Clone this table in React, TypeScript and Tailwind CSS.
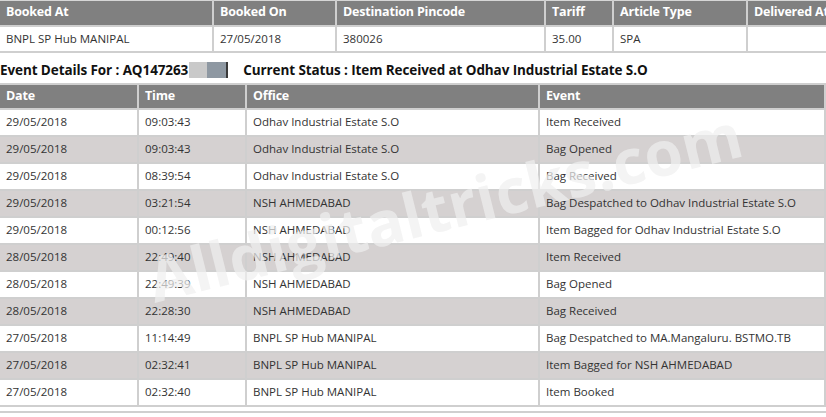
import React from "react";

interface EventRow {
  date: string;
  time: string;
  office: string;
  event: string;
}

const events: EventRow[] = [
  { date: "29/05/2018", time: "09:03:43", office: "Odhav Industrial Estate S.O", event: "Item Received" },
  { date: "29/05/2018", time: "09:03:43", office: "Odhav Industrial Estate S.O", event: "Bag Opened" },
  { date: "29/05/2018", time: "08:39:54", office: "Odhav Industrial Estate S.O", event: "Bag Received" },
  { date: "29/05/2018", time: "03:21:54", office: "NSH AHMEDABAD", event: "Bag Despatched to Odhav Industrial Estate S.O" },
  { date: "29/05/2018", time: "00:12:56", office: "NSH AHMEDABAD", event: "Item Bagged for Odhav Industrial Estate S.O" },
  { date: "28/05/2018", time: "22:49:40", office: "NSH AHMEDABAD", event: "Item Received" },
  { date: "28/05/2018", time: "22:49:39", office: "NSH AHMEDABAD", event: "Bag Opened" },
  { date: "28/05/2018", time: "22:28:30", office: "NSH AHMEDABAD", event: "Bag Received" },
  { date: "27/05/2018", time: "11:14:49", office: "BNPL SP Hub MANIPAL", event: "Bag Despatched to MA.Mangaluru. BSTMO.TB" },
  { date: "27/05/2018", time: "02:32:41", office: "BNPL SP Hub MANIPAL", event: "Item Bagged for NSH AHMEDABAD" },
  { date: "27/05/2018", time: "02:32:40", office: "BNPL SP Hub MANIPAL", event: "Item Booked" },
];

const th = "h-[25px] px-[6px] text-left font-bold text-white text-[12.5px] tracking-[-0.2px] border-x-2 border-[#cfcfcf] first:border-l-0 whitespace-nowrap";
const td = "px-[6px] text-left text-[11.5px] text-[#333] border-2 border-[#cfcfcf] first:border-l-0 whitespace-nowrap";

export default function App() {
  return (
    <div
      className="relative w-[826px] h-[417px] overflow-hidden bg-white"
      style={{ fontFamily: '"Open Sans", "Noto Sans", sans-serif' }}
    >
      {/* booking summary */}
      <table className="w-[880px] table-fixed border-collapse border-t border-[#d6d6d6]">
        <colgroup>
          <col className="w-[213px]" />
          <col className="w-[123px]" />
          <col className="w-[209px]" />
          <col className="w-[68px]" />
          <col className="w-[134px]" />
          <col />
        </colgroup>
        <thead className="bg-[#808080]">
          <tr>
            <th className={th}>Booked At</th>
            <th className={th}>Booked On</th>
            <th className={th}>Destination Pincode</th>
            <th className={th}>Tariff</th>
            <th className={th}>Article Type</th>
            <th className={th}>Delivered At</th>
          </tr>
        </thead>
        <tbody>
          <tr>
            <td className={`${td} h-[26px]`}>BNPL SP Hub MANIPAL</td>
            <td className={`${td} h-[26px]`}>27/05/2018</td>
            <td className={`${td} h-[26px]`}>380026</td>
            <td className={`${td} h-[26px]`}>35.00</td>
            <td className={`${td} h-[26px]`}>SPA</td>
            <td className={`${td} h-[26px]`}></td>
          </tr>
        </tbody>
      </table>

      <div className="h-[30px] pt-[5px] flex items-center text-[13.5px] tracking-[-0.1px] font-bold text-[#111] whitespace-nowrap">
        <span>Event Details For : AQ147263</span>
        <span className="ml-px inline-block w-[18px] h-[16px] bg-[#c9c9c9]" />
        <span className="inline-block w-[19px] h-[16px] bg-[#8e98a2]" />
        <span className="inline-block w-[2px] h-[16px] bg-[#3a3a3a]" />
        <span className="ml-[15px]">Current Status : Item Received at Odhav Industrial Estate S.O</span>
      </div>

      {/* event history */}
      <table className="w-[826px] table-fixed border-collapse">
        <colgroup>
          <col className="w-[138px]" />
          <col className="w-[108px]" />
          <col className="w-[293px]" />
          <col />
        </colgroup>
        <thead className="bg-[#808080]">
          <tr>
            <th className={`${th} border-t-2`}>Date</th>
            <th className={`${th} border-t-2`}>Time</th>
            <th className={`${th} border-t-2`}>Office</th>
            <th className={`${th} border-t-2`}>Event</th>
          </tr>
        </thead>
        <tbody>
          {events.map((row, i) => (
            <tr key={i} className={i % 2 === 1 ? "bg-[#d5d1d1]" : "bg-white"}>
              <td className={`${td} h-[27px]`}>{row.date}</td>
              <td className={`${td} h-[27px]`}>{row.time}</td>
              <td className={`${td} h-[27px]`}>{row.office}</td>
              <td className={`${td} h-[27px]`}>{row.event}</td>
            </tr>
          ))}
        </tbody>
      </table>
      <div className="mt-[4px] h-[2px] bg-[#cfcfcf]" />

      {/* site watermark */}
      <div className="pointer-events-none absolute left-[140px] top-[160px] -rotate-[14deg] text-[62px] font-bold text-[#f0f0f0] opacity-[0.7] whitespace-nowrap tracking-[0.5px]">
        Alldigitaltricks.com
      </div>
    </div>
  );
}
